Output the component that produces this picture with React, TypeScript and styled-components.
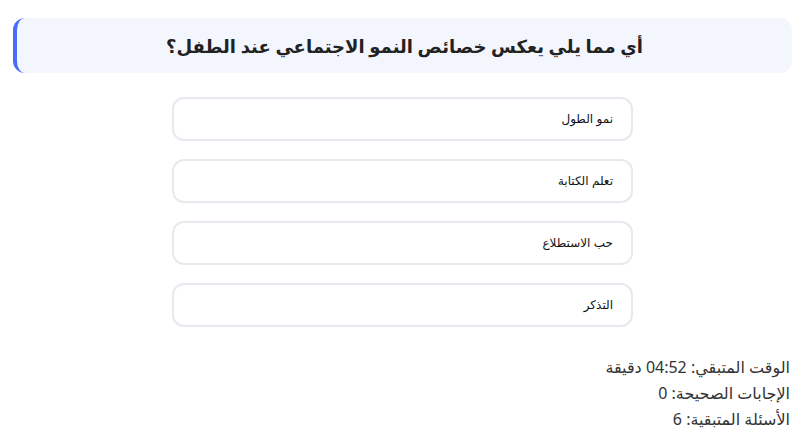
import React from "react";
import styled, { createGlobalStyle } from "styled-components";

const Global = createGlobalStyle`
  html, body { margin: 0; padding: 0; background: #ffffff; }
  body { font-family: "Noto Sans", "DejaVu Sans", sans-serif; }
`;

const Page = styled.div`
  direction: rtl;
  padding: 18px 8px 0 8px;
  display: flex;
  flex-direction: column;
`;

const Question = styled.div`
  margin-left: 5px;
  height: 55px;
  box-sizing: border-box;
  background: #f4f6fe;
  border-left: 4px solid #4a6cf7;
  border-radius: 12px;
  display: flex;
  align-items: center;
  justify-content: center;
  font-size: 18px;
  font-weight: 700;
  color: #222;
`;

const Options = styled.div`
  margin-left: 5px;
  display: flex;
  flex-direction: column;
  align-items: center;
  gap: 18px;
  margin-top: 24px;
`;

const Option = styled.button`
  direction: rtl;
  width: 461px;
  height: 44px;
  box-sizing: border-box;
  background: #fff;
  border: 2px solid #e7e9ee;
  border-radius: 12px;
  padding: 0 18px;
  text-align: right;
  font-family: "Liberation Sans", "DejaVu Sans", sans-serif;
  font-size: 12px;
  color: #111;
  cursor: pointer;
`;

const Stats = styled.div`
  margin-top: 27px;
  padding-right: 2px;
  display: flex;
  flex-direction: column;
  font-size: 16px;
  line-height: 26px;
  color: #333;
`;

const options = ["نمو الطول", "تعلم الكتابة", "حب الاستطلاع", "التذكر"];

export default function App() {
  return (
    <>
      <Global />
      <Page>
        <Question>أي مما يلي يعكس خصائص النمو الاجتماعي عند الطفل؟</Question>
        <Options>
          {options.map((o) => (
            <Option key={o}>{o}</Option>
          ))}
        </Options>
        <Stats>
          <div>الوقت المتبقي: 04:52 دقيقة</div>
          <div>الإجابات الصحيحة: 0</div>
          <div>الأسئلة المتبقية: 6</div>
        </Stats>
      </Page>
    </>
  );
}
